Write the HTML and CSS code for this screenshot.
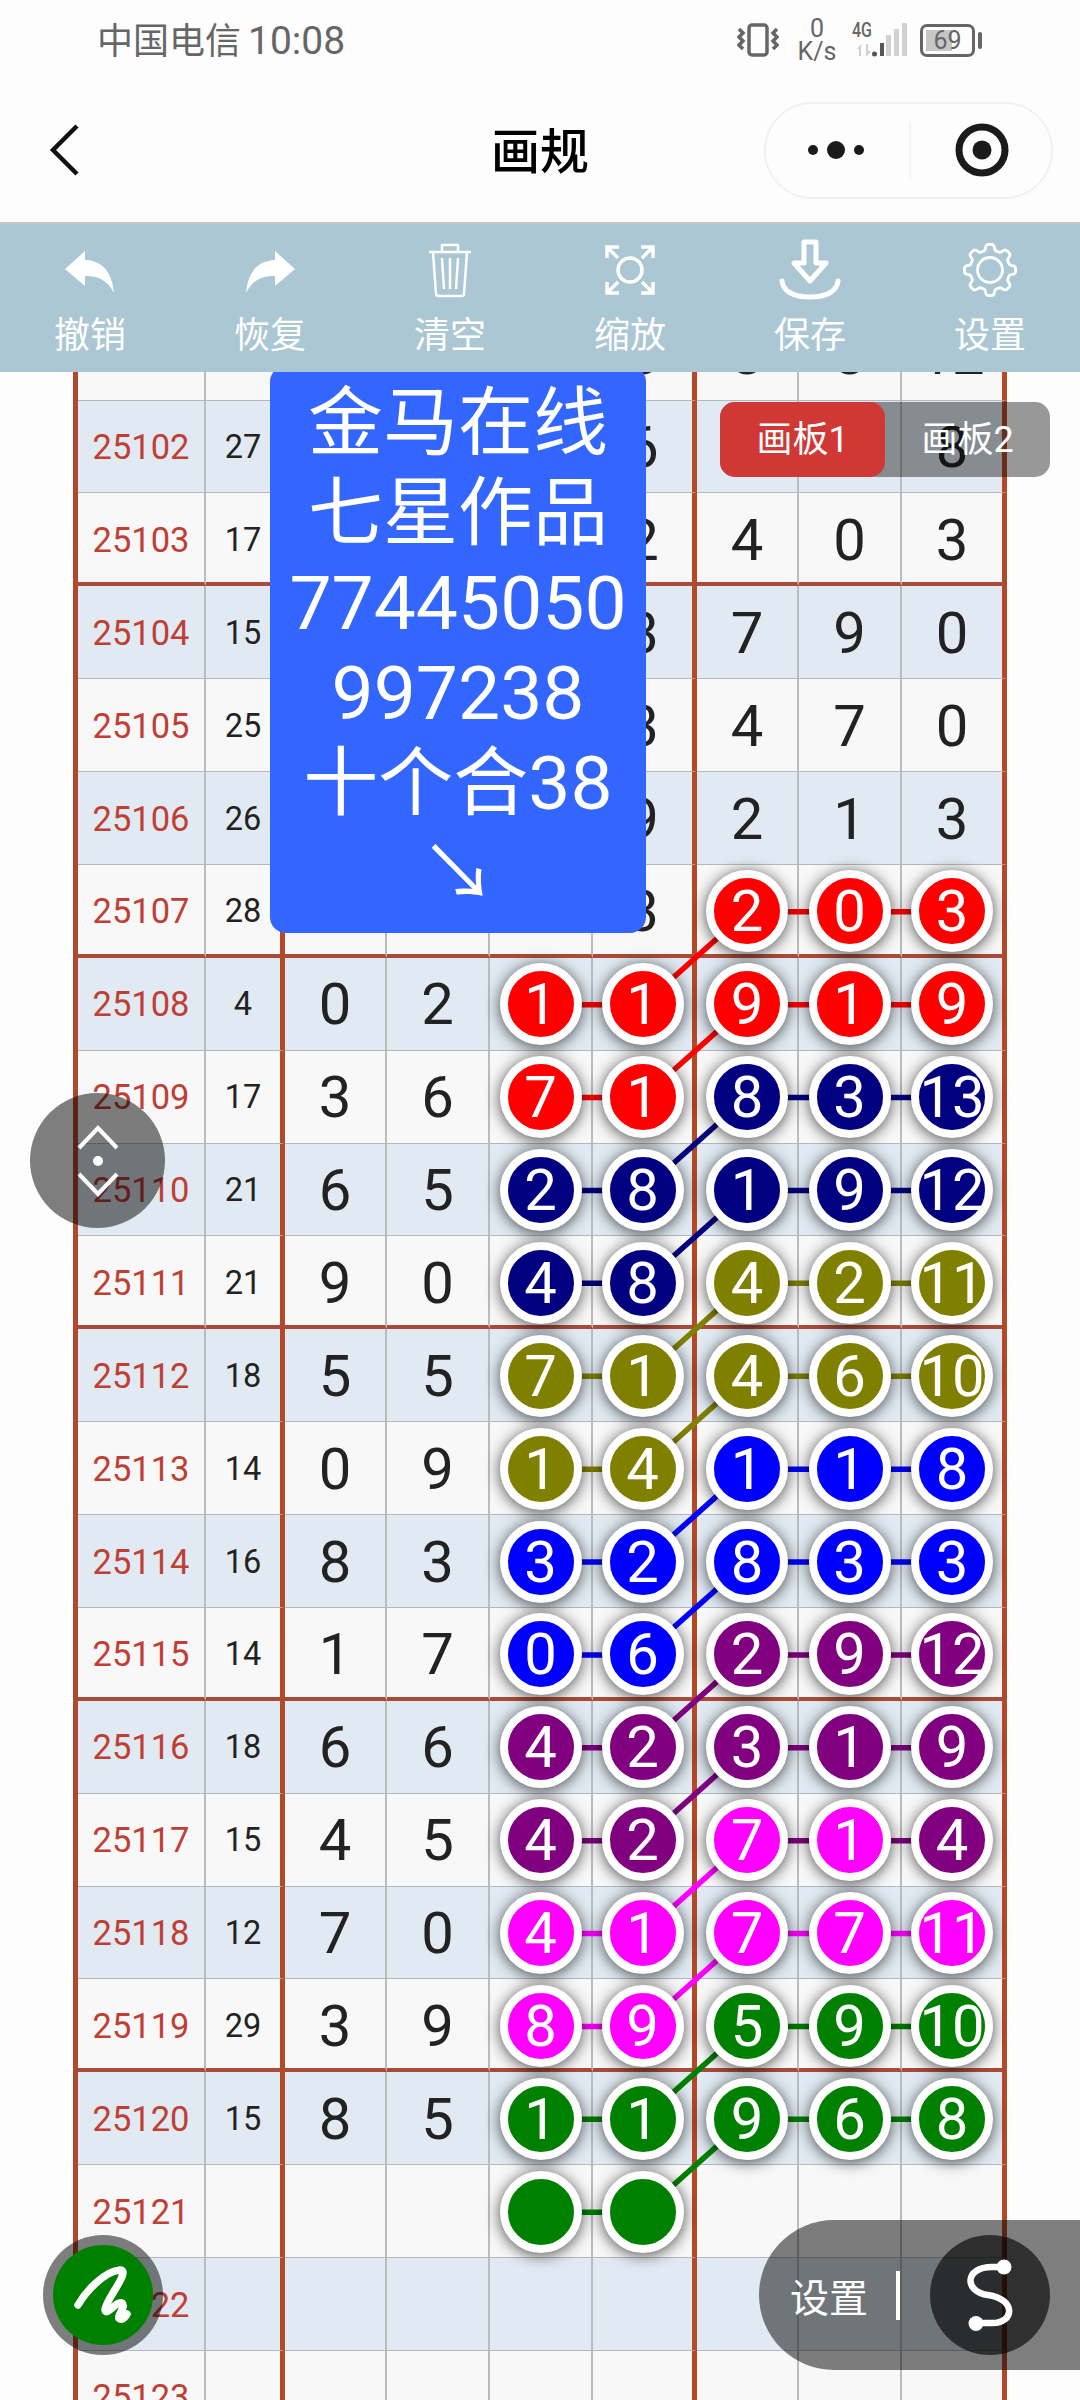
FILE: index.html
```html
<!DOCTYPE html>
<html lang="zh-CN">
<head>
  <meta charset="UTF-8">
  <meta name="viewport" content="width=device-width, initial-scale=1.0">
  <title>画规</title>
  <link rel="stylesheet" href="styles.css">
</head>
<body>

  <div class="status-bar">
    <div class="carrier"><span>中国电信</span><span>10:08</span></div>
    <div class="status-icons">
      <svg class="icon-vibrate" width="42" height="34" viewBox="0 0 42 34" fill="none" stroke="#666" stroke-width="3.500">
        <rect x="12" y="2" width="18" height="30" rx="3"/>
        <path d="M2 6l4 4-4 4 4 4-4 4 4 4M40 6l-4 4 4 4-4 4 4 4-4 4"/>
      </svg>
      <div class="net-speed"><span>0</span><span>K/s</span></div>
      <div class="signal">
        <span>4G</span>
        <svg width="54" height="34" viewBox="0 0 54 34">
          <path fill="#d0d0d0" d="M3 26l4-5v12H5v-7zM13 33l4-5h-3v-7h-2v12zM32 12h5v21h-5zM40 6h5v27h-5zM48 0h5v33h-5z"/>
          <circle cx="20.500" cy="31" r="2.500" fill="#555"/>
          <path fill="#555" d="M26 20h4v13h-4z"/>
        </svg>
      </div>
      <div class="battery">69</div>
    </div>
  </div>

  <header class="nav-bar">
    <svg class="back" width="32" height="52" viewBox="0 0 32 52" fill="none" stroke="#111" stroke-width="4.500">
      <path d="M29 2L5 26l24 24"/>
    </svg>
    <h1>画规</h1>
    <div class="capsule">
      <svg width="56" height="20" viewBox="0 0 56 20" fill="#1a1a1a">
        <circle cx="5" cy="10" r="5"/><circle cx="28" cy="10" r="9"/><circle cx="51" cy="10" r="5"/>
      </svg>
      <i class="capsule-line"></i>
      <svg width="54" height="54" viewBox="0 0 54 54">
        <circle cx="27" cy="27" r="23" fill="none" stroke="#1a1a1a" stroke-width="7"/>
        <circle cx="27" cy="27" r="9.500" fill="#1a1a1a"/>
      </svg>
    </div>
  </header>

  <nav class="toolbar">
    <div class="tool">
      <svg viewBox="0 0 64 64" fill="#fff"><path d="M7 31L27 13v9c18 1 27 12 29 33-7-13-15-17-29-17v10z"/></svg>
      <span>撤销</span>
    </div>
    <div class="tool">
      <svg viewBox="0 0 64 64" fill="#fff"><path d="M57 31L37 13v9C19 23 10 34 8 55c7-13 15-17 29-17v10z"/></svg>
      <span>恢复</span>
    </div>
    <div class="tool">
      <svg viewBox="0 0 64 64" fill="none" stroke="#fff" stroke-width="2.500" stroke-linejoin="round">
        <path d="M11 14h42M24 14V7h16v7M15 14l3 42q0 2 3 2h22q3 0 3-2l3-42M24 20l2 31M32 20v31M40 20l-2 31"/>
      </svg>
      <span>清空</span>
    </div>
    <div class="tool">
      <svg viewBox="0 0 64 64" fill="none" stroke="#fff" stroke-width="3.500">
        <circle cx="32" cy="32" r="12"/>
        <path d="M9 20V9h12M9 9l11 11M55 20V9H43M55 9L44 20M9 44v11h12M9 55l11-11M55 44v11H43M55 55L44 44"/>
      </svg>
      <span>缩放</span>
    </div>
    <div class="tool">
      <svg viewBox="0 0 64 64" fill="none" stroke="#fff" stroke-width="5" stroke-linejoin="round" stroke-linecap="round">
        <path d="M26 4h12v21h10L32 43 16 25h10z"/>
        <path d="M4 43c1 10 11 16 28 16s27-6 28-16"/>
      </svg>
      <span>保存</span>
    </div>
    <div class="tool">
      <svg viewBox="0 0 64 64" fill="none" stroke="#fff" stroke-width="2.800" stroke-linejoin="round">
        <circle cx="32" cy="32" r="12.500"/>
        <path id="gear"/>
      </svg>
      <span>设置</span>
    </div>
  </nav>

  <main class="board">
    <div class="chart" id="chart">
      <svg class="links" id="links"></svg>
    </div>

    <div class="note">金马在线<br>七星作品<br>77445050<br>997238<br>十个合38<br>↘</div>

    <div class="tabs">
      <span class="tab active">画板1</span>
      <span class="tab">画板2</span>
    </div>

    <div class="scroll-handle">
      <svg width="44" height="72" viewBox="0 0 44 72" fill="none" stroke="#fff" stroke-width="4">
        <path d="M3 23L22 3l19 20M3 49l19 20 19-20"/>
        <circle cx="22" cy="36" r="5" fill="#fff" stroke="none"/>
      </svg>
    </div>

    <div class="pen">
      <svg viewBox="0 0 100 100" fill="none" stroke="#fff" stroke-width="7.500" stroke-linecap="round" stroke-linejoin="round">
        <path d="M25 60C33 46 52 26 67 25C79 25 51 57 52 65C53 72 64 55 69 58C74 62 62 72 67 74C70 75 73 71 74 69"/>
      </svg>
    </div>

    <div class="dock">
      <span>设置</span>
      <i class="dock-line"></i>
      <div class="curve">
        <svg width="120" height="120" viewBox="0 0 120 120" fill="none" stroke="#fff" stroke-width="6.500">
          <path d="M74 32H62C34 32 34 57 58 60C86 64 85 88 62 88H46"/>
          <circle cx="74" cy="32" r="7.500" fill="#fff" stroke="none"/>
          <circle cx="46" cy="88.500" r="7.500" fill="#fff" stroke="none"/>
        </svg>
      </div>
    </div>
  </main>

  <script src="script.js"></script>
</body>
</html>
```
FILE: styles.css
```css
* {
  box-sizing: border-box;
}

body {
  margin: 0;
  width: 1080px;
  height: 2400px;
  overflow: hidden;
  display: flex;
  flex-direction: column;
  background: #fdfdfd;
  font-family: Roboto, "Noto Sans CJK SC", sans-serif;
  color: #222;
}

svg {
  display: block;
}

/* status bar */
.status-bar {
  flex: none;
  height: 80px;
  padding: 0 98px 0 97px;
  display: flex;
  justify-content: space-between;
  align-items: center;
  color: #666;
}

.carrier {
  display: flex;
  align-items: baseline;
  gap: 7px;
  margin-top: 2px;
  font-size: 39px;
  line-height: 44px;
  white-space: nowrap;
}

.carrier span:first-child {
  font-size: 36px;
}

.status-icons {
  display: flex;
  align-items: center;
}

.net-speed {
  width: 40px;
  margin: 0 17px 0 18px;
  display: flex;
  flex-direction: column;
  align-items: center;
  font-size: 25px;
  line-height: 23px;
}

.signal {
  position: relative;
  width: 54px;
  margin-right: 12px;
}

.signal span {
  position: absolute;
  left: -2px;
  top: -2px;
  font-size: 20px;
  line-height: 19px;
  font-weight: 500;
  transform: scaleX(0.8);
  transform-origin: left;
}

.battery {
  position: relative;
  width: 55px;
  height: 33px;
  margin-right: 7px;
  border: 3px solid #666;
  border-radius: 7px;
  background: linear-gradient(#c6c6c6, #c6c6c6) 3px 3px / 26px 21px no-repeat;
  font-size: 25px;
  line-height: 28px;
  text-align: center;
}

.battery::after {
  content: "";
  position: absolute;
  right: -10px;
  top: 5px;
  width: 4px;
  height: 17px;
  border-radius: 2px;
  background: #666;
}

/* title */
.nav-bar {
  flex: none;
  height: 142px;
  padding: 0 27px 2px 48px;
  display: grid;
  grid-template-columns: 289px 1fr 289px;
  align-items: center;
}

.nav-bar h1 {
  margin: 5px 0 0 -21px;
  font-size: 49px;
  font-weight: 500;
  line-height: 60px;
  text-align: center;
  color: #000;
}

.capsule {
  width: 289px;
  height: 97px;
  border: 2px solid #f1f1f1;
  border-radius: 49px;
  display: flex;
  align-items: center;
  justify-content: space-between;
  padding: 0 42px;
}

.capsule-line {
  width: 2px;
  height: 56px;
  background: #f4f4f4;
}

/* toolbar */
.toolbar {
  flex: none;
  position: relative;
  z-index: 2;
  height: 150px;
  border-top: 2px solid #c3c6c7;
  background: #aac7d3;
  display: grid;
  grid-template-columns: repeat(6, 1fr);
  color: #fff;
}

.tool {
  padding-top: 14px;
  display: flex;
  flex-direction: column;
  align-items: center;
  font-size: 36px;
  line-height: 44px;
}

.tool svg {
  width: 64px;
  height: 64px;
  margin-bottom: 12px;
}

/* board */
.board {
  position: relative;
  flex: 1;
  overflow: hidden;
}

.chart {
  position: relative;
  width: 934px;
  margin: -64.300px 0 0 73px;
  border-left: 5px solid #b0482f;
}

.row {
  height: 92.890px;
  display: grid;
  grid-template-columns: 128px 79px 102px 103px 103px 104px 102px 103px 105px;
  background: #f8f8f8;
}

.row:nth-child(odd) {
  background: #e1eaf2;
}

.cell {
  display: flex;
  align-items: center;
  justify-content: center;
  padding-top: 1px;
  border-right: 2px solid #b9bbbd;
  border-bottom: 1px solid #b4b8bd;
  font-size: 58px;
}

.row.split .cell {
  padding-top: 4px;
  border-bottom: 4px solid #a94b38;
}

.cell:nth-child(2),
.cell:nth-child(6),
.cell:nth-child(9) {
  border-right: 5px solid #b24a28;
}

.cell.issue {
  font-size: 34.500px;
  color: #bf3f35;
}

.cell.sum {
  font-size: 32.500px;
}

.ball {
  position: relative;
  z-index: 1;
  flex: none;
  width: 82px;
  height: 82px;
  border: 8px solid #fff;
  border-radius: 50%;
  box-shadow: 0 2px 15px rgba(0, 0, 0, 0.7);
  display: flex;
  align-items: center;
  justify-content: center;
  color: #fff;
}

.red { background: #ff0000; }
.navy { background: #000080; }
.olive { background: #808000; }
.blue { background: #0000ff; }
.purple { background: #800080; }
.magenta { background: #ff00ff; }
.green { background: #008000; }

.links {
  position: absolute;
  left: 0;
  top: 0;
  width: 100%;
  height: 100%;
  stroke-width: 5.500;
}

.note {
  position: absolute;
  left: 270px;
  top: -6px;
  width: 376px;
  height: 567px;
  padding-top: 12px;
  border-radius: 16px;
  background: #3366ff;
  color: #fff;
  font-size: 75px;
  line-height: 90px;
  text-align: center;
  z-index: 1;
}

.tabs {
  position: absolute;
  left: 720px;
  top: 30px;
  width: 330px;
  height: 75px;
  border-radius: 15px;
  background: rgba(0, 0, 0, 0.4);
  display: flex;
  z-index: 1;
}

.tab {
  flex: 1;
  font-size: 36px;
  line-height: 76px;
  text-align: center;
  color: #fff;
}

.tab.active {
  border-radius: 15px;
  background: #d03836;
}

.scroll-handle {
  position: absolute;
  left: 30px;
  top: 721px;
  width: 135px;
  height: 135px;
  border-radius: 50%;
  background: rgba(0, 0, 0, 0.5);
  display: flex;
  align-items: center;
  justify-content: center;
}

.pen {
  position: absolute;
  left: 43px;
  top: 1863px;
  width: 120px;
  height: 120px;
  padding: 10px;
  border-radius: 50%;
  background: radial-gradient(#008000 49.500px, rgba(0, 0, 0, 0.5) 50.500px);
}

.dock {
  position: absolute;
  right: 0;
  top: 1848px;
  width: 321px;
  height: 150px;
  padding: 0 30px 0 31px;
  border-radius: 75px 0 0 75px;
  background: rgba(0, 0, 0, 0.5);
  display: flex;
  align-items: center;
  justify-content: space-between;
  color: #fff;
  font-size: 39px;
  z-index: 1;
}

.dock-line {
  width: 4px;
  height: 49px;
  margin-right: 2px;
  background: #fff;
}

.curve {
  width: 120px;
  height: 120px;
  border-radius: 50%;
  background: rgba(0, 0, 0, 0.62);
}
```
FILE: script.js
```js
// issue, sum, seven digit columns, then ball colours for the left pair and the right three
const rows = [
  ['', '', ['', '', '', '8', '8', '8', '12']],
  ['25102', '27', ['', '', '', '6', '', '', '8']],
  ['25103', '17', ['', '', '', '2', '4', '0', '3']],
  ['25104', '15', ['', '', '', '3', '7', '9', '0']],
  ['25105', '25', ['', '', '', '3', '4', '7', '0']],
  ['25106', '26', ['', '', '', '9', '2', '1', '3']],
  ['25107', '28', ['', '', '', '3', '2', '0', '3'], '', 'red'],
  ['25108', '4', ['0', '2', '1', '1', '9', '1', '9'], 'red', 'red'],
  ['25109', '17', ['3', '6', '7', '1', '8', '3', '13'], 'red', 'navy'],
  ['25110', '21', ['6', '5', '2', '8', '1', '9', '12'], 'navy', 'navy'],
  ['25111', '21', ['9', '0', '4', '8', '4', '2', '11'], 'navy', 'olive'],
  ['25112', '18', ['5', '5', '7', '1', '4', '6', '10'], 'olive', 'olive'],
  ['25113', '14', ['0', '9', '1', '4', '1', '1', '8'], 'olive', 'blue'],
  ['25114', '16', ['8', '3', '3', '2', '8', '3', '3'], 'blue', 'blue'],
  ['25115', '14', ['1', '7', '0', '6', '2', '9', '12'], 'blue', 'purple'],
  ['25116', '18', ['6', '6', '4', '2', '3', '1', '9'], 'purple', 'purple'],
  ['25117', '15', ['4', '5', '4', '2', '7', '1', '4'], 'purple', 'magenta', 'purple'],
  ['25118', '12', ['7', '0', '4', '1', '7', '7', '11'], 'magenta', 'magenta'],
  ['25119', '29', ['3', '9', '8', '9', '5', '9', '10'], 'magenta', 'green'],
  ['25120', '15', ['8', '5', '1', '1', '9', '6', '8'], 'green', 'green'],
  ['25121', '', ['', '', '', '', '', '', ''], 'green', ''],
  ['25122', '', ['', '', '', '', '', '', '']],
  ['25123', '', ['', '', '', '', '', '', '']]
];

const ROW_H = 92.89;
const COL_X = [257, 360, 462.5, 565, 669, 771.5, 874.5];

const chart = document.getElementById('chart');
let lines = '';

function link(c1, r1, c2, r2, color) {
  const y = r => (r + 0.5) * ROW_H;
  lines += `<line x1="${COL_X[c1]}" y1="${y(r1)}" x2="${COL_X[c2]}" y2="${y(r2)}" stroke="${color}"/>`;
}

rows.forEach(([issue, sum, digits, left, right, last], r) => {
  const row = document.createElement('div');
  row.className = r % 4 === 2 ? 'row split' : 'row';
  let html = `<div class="cell issue">${issue}</div><div class="cell sum">${sum}</div>`;
  digits.forEach((digit, c) => {
    let color = '';
    if (c === 2 || c === 3) color = left;
    if (c > 3) color = right;
    if (c === 6 && last) color = last;
    html += `<div class="cell">${color ? `<span class="ball ${color}">${digit}</span>` : digit}</div>`;
  });
  row.innerHTML = html;
  chart.appendChild(row);

  if (left) link(2, r, 3, r, left);
  if (right) {
    link(4, r, 5, r, last || right);
    link(5, r, 6, r, last || right);
    link(4, r, 3, r + 1, right);
  }
});

document.getElementById('links').innerHTML = lines;

// eight rounded teeth
let d = '';
for (let i = 0; i <= 160; i++) {
  const a = i / 160 * Math.PI * 2;
  const k = 22.8 + 2.9 * Math.tanh(2.4 * Math.cos(8 * a));
  d += `${i ? 'L' : 'M'}${(32 + k * Math.cos(a)).toFixed(2)} ${(32 + k * Math.sin(a)).toFixed(2)}`;
}
document.getElementById('gear').setAttribute('d', d + 'Z');
```
